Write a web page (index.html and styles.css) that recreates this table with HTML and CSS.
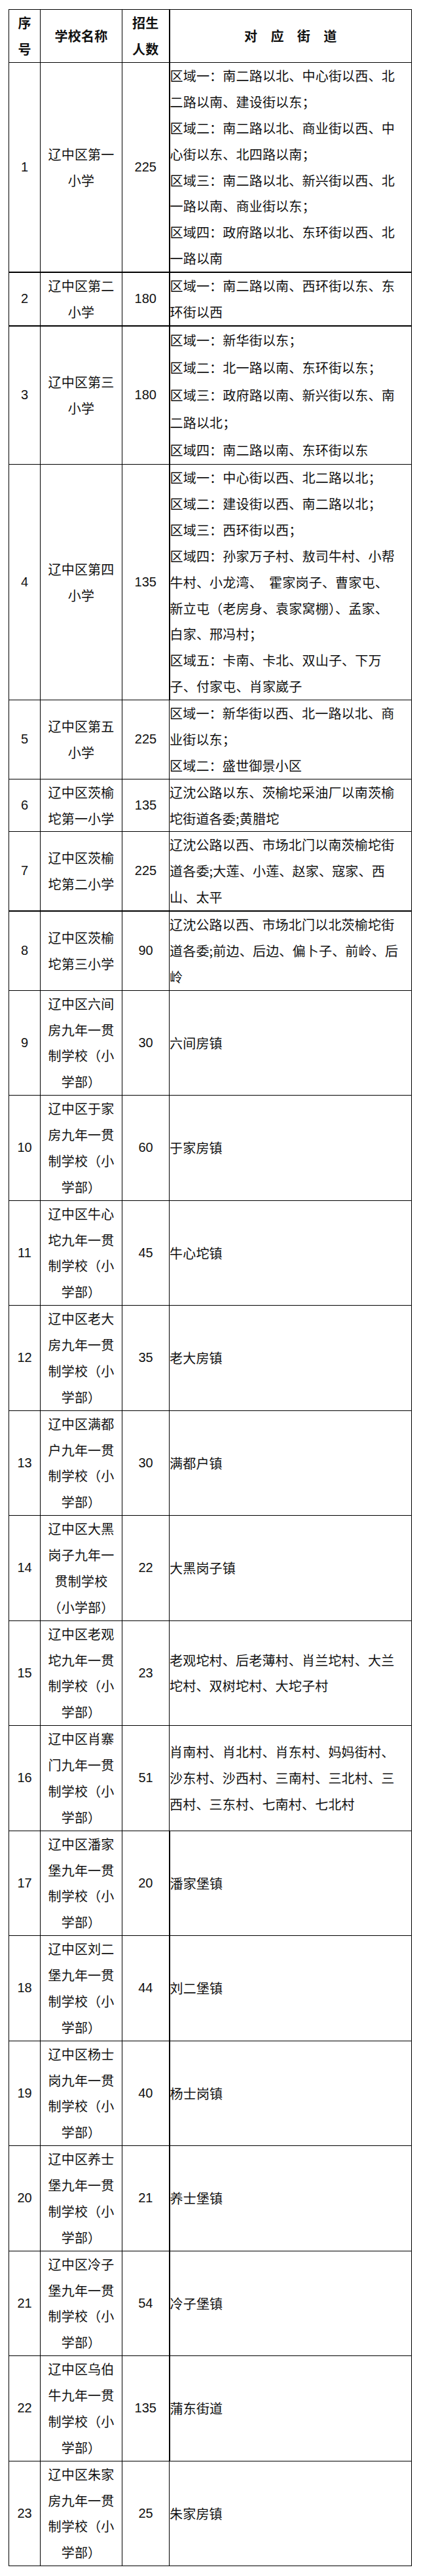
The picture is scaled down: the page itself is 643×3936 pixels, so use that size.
FILE: index.html
```html
<!DOCTYPE html>
<html lang="zh-CN">
<head>
<meta charset="utf-8">
<title>辽中区小学招生对应街道</title>
<link rel="stylesheet" href="styles.css">
</head>
<body>
<table class="roster">
  <colgroup>
    <col class="c-no">
    <col class="c-name">
    <col class="c-count">
    <col class="c-area">
  </colgroup>
  <thead>
    <tr>
      <th class="h-no">序<br>号</th>
      <th class="h-name">学校名称</th>
      <th class="h-count">招生<br>人数</th>
      <th class="h-area thick-left">对　应　街　道</th>
    </tr>
  </thead>
  <tbody>
    <tr class="thick-bottom">
      <td class="num">1</td>
      <td class="name">辽中区第一<br>小学</td>
      <td class="num">225</td>
      <td class="area thick-left">
        <p>区域一：南二路以北、中心街以西、北<br>二路以南、建设街以东；</p>
        <p>区域二：南二路以北、商业街以西、中<br>心街以东、北四路以南；</p>
        <p>区域三：南二路以北、新兴街以西、北<br>一路以南、商业街以东；</p>
        <p>区域四：政府路以北、东环街以西、北<br>一路以南</p>
      </td>
    </tr>
    <tr class="thick-bottom">
      <td class="num">2</td>
      <td class="name">辽中区第二<br>小学</td>
      <td class="num">180</td>
      <td class="area thick-left"><p>区域一：南二路以南、西环街以东、东<br>环街以西</p></td>
    </tr>
    <tr class="spaced">
      <td class="num">3</td>
      <td class="name">辽中区第三<br>小学</td>
      <td class="num">180</td>
      <td class="area thick-left">
        <p>区域一：新华街以东；</p>
        <p>区域二：北一路以南、东环街以东；</p>
        <p>区域三：政府路以南、新兴街以东、南<br>二路以北；</p>
        <p>区域四：南二路以南、东环街以东</p>
      </td>
    </tr>
    <tr>
      <td class="num">4</td>
      <td class="name">辽中区第四<br>小学</td>
      <td class="num">135</td>
      <td class="area thick-left">
        <p>区域一：中心街以西、北二路以北；</p>
        <p>区域二：建设街以西、南二路以北；</p>
        <p>区域三：西环街以西；</p>
        <p>区域四：孙家万子村、敖司牛村、小帮<br>牛村、小龙湾、&ensp;霍家岗子、曹家屯、<br>新立屯（老房身、袁家窝棚）、孟家、<br>白家、邢冯村；</p>
        <p>区域五：卡南、卡北、双山子、下万<br>子、付家屯、肖家崴子</p>
      </td>
    </tr>
    <tr>
      <td class="num">5</td>
      <td class="name">辽中区第五<br>小学</td>
      <td class="num">225</td>
      <td class="area">
        <p>区域一：新华街以西、北一路以北、商<br>业街以东；</p>
        <p>区域二：盛世御景小区</p>
      </td>
    </tr>
    <tr>
      <td class="num">6</td>
      <td class="name">辽中区茨榆<br>坨第一小学</td>
      <td class="num">135</td>
      <td class="area"><p>辽沈公路以东、茨榆坨采油厂以南茨榆<br>坨街道各委;黄腊坨</p></td>
    </tr>
    <tr class="thick-bottom">
      <td class="num">7</td>
      <td class="name">辽中区茨榆<br>坨第二小学</td>
      <td class="num">225</td>
      <td class="area"><p>辽沈公路以西、市场北门以南茨榆坨街<br>道各委;大莲、小莲、赵家、寇家、西<br>山、太平</p></td>
    </tr>
    <tr>
      <td class="num">8</td>
      <td class="name">辽中区茨榆<br>坨第三小学</td>
      <td class="num">90</td>
      <td class="area"><p>辽沈公路以西、市场北门以北茨榆坨街<br>道各委;前边、后边、偏卜子、前岭、后<br>岭</p></td>
    </tr>
    <tr>
      <td class="num">9</td>
      <td class="name">辽中区六间<br>房九年一贯<br>制学校（小<br>学部）</td>
      <td class="num">30</td>
      <td class="area"><p>六间房镇</p></td>
    </tr>
    <tr>
      <td class="num">10</td>
      <td class="name">辽中区于家<br>房九年一贯<br>制学校（小<br>学部）</td>
      <td class="num">60</td>
      <td class="area"><p>于家房镇</p></td>
    </tr>
    <tr>
      <td class="num">11</td>
      <td class="name">辽中区牛心<br>坨九年一贯<br>制学校（小<br>学部）</td>
      <td class="num">45</td>
      <td class="area"><p>牛心坨镇</p></td>
    </tr>
    <tr>
      <td class="num">12</td>
      <td class="name">辽中区老大<br>房九年一贯<br>制学校（小<br>学部）</td>
      <td class="num">35</td>
      <td class="area"><p>老大房镇</p></td>
    </tr>
    <tr>
      <td class="num">13</td>
      <td class="name">辽中区满都<br>户九年一贯<br>制学校（小<br>学部）</td>
      <td class="num">30</td>
      <td class="area"><p>满都户镇</p></td>
    </tr>
    <tr>
      <td class="num">14</td>
      <td class="name">辽中区大黑<br>岗子九年一<br>贯制学校<br>（小学部）</td>
      <td class="num">22</td>
      <td class="area"><p>大黑岗子镇</p></td>
    </tr>
    <tr>
      <td class="num">15</td>
      <td class="name">辽中区老观<br>坨九年一贯<br>制学校（小<br>学部）</td>
      <td class="num">23</td>
      <td class="area"><p>老观坨村、后老薄村、肖兰坨村、大兰<br>坨村、双树坨村、大坨子村</p></td>
    </tr>
    <tr>
      <td class="num">16</td>
      <td class="name">辽中区肖寨<br>门九年一贯<br>制学校（小<br>学部）</td>
      <td class="num">51</td>
      <td class="area"><p>肖南村、肖北村、肖东村、妈妈街村、<br>沙东村、沙西村、三南村、三北村、三<br>西村、三东村、七南村、七北村</p></td>
    </tr>
    <tr>
      <td class="num">17</td>
      <td class="name">辽中区潘家<br>堡九年一贯<br>制学校（小<br>学部）</td>
      <td class="num">20</td>
      <td class="area thick-left"><p>潘家堡镇</p></td>
    </tr>
    <tr>
      <td class="num">18</td>
      <td class="name">辽中区刘二<br>堡九年一贯<br>制学校（小<br>学部）</td>
      <td class="num">44</td>
      <td class="area thick-left"><p>刘二堡镇</p></td>
    </tr>
    <tr>
      <td class="num">19</td>
      <td class="name">辽中区杨士<br>岗九年一贯<br>制学校（小<br>学部）</td>
      <td class="num">40</td>
      <td class="area thick-left"><p>杨士岗镇</p></td>
    </tr>
    <tr>
      <td class="num">20</td>
      <td class="name">辽中区养士<br>堡九年一贯<br>制学校（小<br>学部）</td>
      <td class="num">21</td>
      <td class="area thick-left"><p>养士堡镇</p></td>
    </tr>
    <tr>
      <td class="num">21</td>
      <td class="name">辽中区冷子<br>堡九年一贯<br>制学校（小<br>学部）</td>
      <td class="num">54</td>
      <td class="area thick-left"><p>冷子堡镇</p></td>
    </tr>
    <tr>
      <td class="num">22</td>
      <td class="name">辽中区乌伯<br>牛九年一贯<br>制学校（小<br>学部）</td>
      <td class="num">135</td>
      <td class="area thick-left"><p>蒲东街道</p></td>
    </tr>
    <tr>
      <td class="num">23</td>
      <td class="name">辽中区朱家<br>房九年一贯<br>制学校（小<br>学部）</td>
      <td class="num">25</td>
      <td class="area"><p>朱家房镇</p></td>
    </tr>
  </tbody>
</table>
</body>
</html>
```

FILE: styles.css
```css
html, body {
  margin: 0;
  padding: 0;
  background: #ffffff;
}

body {
  color: #111111;
  font-family: "Noto Sans CJK SC", "Noto Sans", sans-serif;
}

.roster {
  border-collapse: collapse;
  table-layout: fixed;
  width: 615px;
  margin: 14px 0 15px 13px;
  font-size: 20px;
  letter-spacing: 0.2px;
  line-height: 39.875px;
}

.c-no { width: 48px; }
.c-name { width: 125px; }
.c-count { width: 72px; }
.c-area { width: 370px; }

.roster th,
.roster td {
  border: 1px solid #000000;
  padding: 0;
  vertical-align: middle;
  white-space: nowrap;
}

.roster th {
  font-weight: 700;
  text-align: center;
  line-height: 40px;
}

.num {
  text-align: center;
  font-family: "Liberation Sans", Arial, sans-serif;
  font-size: 20px;
  letter-spacing: 0;
}

.name {
  text-align: center;
}

.area {
  text-align: left;
  padding: 0 10px 0 8px;
}

.h-area {
  letter-spacing: 0.2px;
}

.area p {
  margin: 0;
}

.spaced .area {
  line-height: 42.1px;
}

.thick-bottom td {
  border-bottom-width: 2px;
}

.roster .thick-left {
  border-left-width: 2px;
}
```
